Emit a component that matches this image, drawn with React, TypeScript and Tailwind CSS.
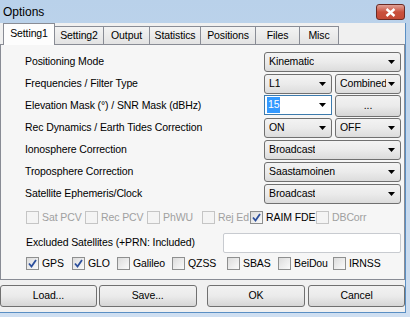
import React from "react";

const font = { fontFamily: '"Liberation Sans", Arial, sans-serif' };

function Arrow() {
  return (
    <svg width="7" height="4" viewBox="0 0 7 4" className="shrink-0">
      <path d="M0 0H7L3.5 4Z" fill="#000" />
    </svg>
  );
}

function Combo({ value, className = "" }: { value: string; className?: string }) {
  return (
    <div
      className={`flex h-[20px] items-center justify-between gap-[2px] rounded-[3px] border border-[#707070] bg-gradient-to-b from-[#f3f3f3] via-[#ebebeb] to-[#dcdcdc] pl-[4px] pr-[5px] ${className}`}
    >
      <span className="min-w-0 overflow-hidden whitespace-nowrap">{value}</span>
      <Arrow />
    </div>
  );
}

function Check({
  label,
  checked = false,
  disabled = false,
  width,
}: {
  label: string;
  checked?: boolean;
  disabled?: boolean;
  width: string;
}) {
  return (
    <div className={`flex shrink-0 items-center gap-[3px] whitespace-nowrap ${width}`}>
      <div
        className={`flex h-[13px] w-[13px] shrink-0 items-center justify-center border ${
          disabled
            ? "border-[#c5c5c5] bg-[#f4f4f4]"
            : "border-[#8e8f8f] bg-gradient-to-br from-[#dcdcdc] to-[#fbfbfb]"
        }`}
      >
        {checked && (
          <svg width="9" height="9" viewBox="0 0 9 9">
            <path d="M1 4.5L3.5 7.5L8 1" stroke="#2c4f9c" strokeWidth="1.8" fill="none" />
          </svg>
        )}
      </div>
      <span className={disabled ? "text-[#a0a0a0]" : "text-black"}>{label}</span>
    </div>
  );
}

function Button({ label, className = "" }: { label: string; className?: string }) {
  return (
    <div
      className={`flex h-[22px] items-center justify-center rounded-[3px] border border-[#707070] bg-gradient-to-b from-[#f2f2f2] via-[#ebebeb] to-[#d6d6d6] ${className}`}
    >
      {label}
    </div>
  );
}

const tabs = [
  { name: "Setting2", w: "w-[49px]" },
  { name: "Output", w: "w-[46px]" },
  { name: "Statistics", w: "w-[51px]" },
  { name: "Positions", w: "w-[55px]" },
  { name: "Files", w: "w-[44px]" },
  { name: "Misc", w: "w-[39px]" },
];

const rows: { label: string; right: React.ReactNode }[] = [
  { label: "Positioning Mode", right: <Combo value="Kinematic" className="w-[137px]" /> },
  {
    label: "Frequencies / Filter Type",
    right: (
      <div className="flex gap-[3px]">
        <Combo value="L1" className="w-[68px]" />
        <Combo value="Combined" className="w-[66px]" />
      </div>
    ),
  },
  {
    label: "Elevation Mask (°) / SNR Mask (dBHz)",
    right: (
      <div className="flex gap-[3px]">
        <div className="flex h-[20px] w-[68px] items-center justify-between border border-[#3d7bad] bg-white pl-[2px] pr-[5px]">
          <span className="bg-[#3399ff] px-[1px] text-white">15</span>
          <Arrow />
        </div>
        <Button label="..." className="h-[20px] w-[66px]" />
      </div>
    ),
  },
  {
    label: "Rec Dynamics / Earth Tides Correction",
    right: (
      <div className="flex gap-[3px]">
        <Combo value="ON" className="w-[68px]" />
        <Combo value="OFF" className="w-[66px]" />
      </div>
    ),
  },
  { label: "Ionosphere Correction", right: <Combo value="Broadcast" className="w-[137px]" /> },
  { label: "Troposphere Correction", right: <Combo value="Saastamoinen" className="w-[137px]" /> },
  { label: "Satellite Ephemeris/Clock", right: <Combo value="Broadcast" className="w-[137px]" /> },
];

export default function App() {
  return (
    <div
      className="relative h-[317px] w-[410px] overflow-hidden bg-gradient-to-b from-[#b9d1ea] to-[#cfdff1] text-[10.5px] tracking-[-0.1px] text-black"
      style={font}
    >
      {/* title bar */}
      <div className="flex h-[23px] items-start justify-between pl-[3px] pr-[5px]">
        <span className="pt-[3px] text-[12px] tracking-normal text-black">Options</span>
        <div className="mt-[4px] flex h-[16px] w-[29px] items-center justify-center rounded-[3px] border border-[#6b2a24] bg-gradient-to-b from-[#e0a197] via-[#c9503d] to-[#c44a36]">
          <svg width="11" height="9" viewBox="0 0 11 9">
            <path d="M1.5 1L9.5 8M9.5 1L1.5 8" stroke="#fff" strokeWidth="2.4" />
          </svg>
        </div>
      </div>

      {/* client area */}
      <div className="flex h-[290px] w-[406px] flex-col border-b border-r border-[#5a8fc4] bg-[#f0f0f0]">
        {/* tab strip */}
        <div className="relative z-10 flex h-[21px] items-end pl-[3px]">
          <div className="mb-[-1px] flex h-[22px] w-[52px] items-center justify-center border border-b-0 border-[#898c95] bg-[#fdfdfd] pb-[2px]">
            Setting1
          </div>
          {tabs.map((t) => (
            <div
              key={t.name}
              className={`flex h-[18px] ${t.w} items-center justify-center border border-b-0 border-l-0 border-[#898c95] bg-gradient-to-b from-[#f3f3f3] to-[#e3e3e3]`}
            >
              {t.name}
            </div>
          ))}
        </div>

        {/* page */}
        <div className="flex h-[236px] w-[405px] flex-col border border-[#898c95] bg-[#f6f6f6] pl-[24px] pr-[3px] pt-[7px]">
          <div className="flex flex-col gap-[2px]">
            {rows.map((r) => (
              <div key={r.label} className="flex h-[20px] items-center justify-between">
                <span className="whitespace-nowrap">{r.label}</span>
                {r.right}
              </div>
            ))}
          </div>

          <div className="mt-[6px] flex h-[15px] items-center pl-[1px]">
            <Check label="Sat PCV" disabled width="w-[59px]" />
            <Check label="Rec PCV" disabled width="w-[62px]" />
            <Check label="PhWU" disabled width="w-[55px]" />
            <Check label="Rej Ed" disabled width="w-[48px]" />
            <Check label="RAIM FDE" checked width="w-[66px]" />
            <Check label="DBCorr" disabled width="w-[60px]" />
          </div>

          <div className="mt-[8px] flex h-[20px] items-center justify-between">
            <span className="whitespace-nowrap pl-[1px]">Excluded Satellites (+PRN: Included)</span>
            <div className="h-[20px] w-[178px] rounded-[2px] border border-[#c8cbd0] bg-white" />
          </div>

          <div className="mt-[3px] flex h-[15px] items-center pl-[1px]">
            <Check label="GPS" checked width="w-[46px]" />
            <Check label="GLO" checked width="w-[45px]" />
            <Check label="Galileo" width="w-[55px]" />
            <Check label="QZSS" width="w-[55px]" />
            <Check label="SBAS" width="w-[51px]" />
            <Check label="BeiDou" width="w-[55px]" />
            <Check label="IRNSS" width="w-[60px]" />
          </div>
        </div>

        {/* buttons */}
        <div className="mt-[5px] flex items-center">
          <Button label="Load..." className="w-[97px]" />
          <Button label="Save..." className="ml-[2px] w-[98px]" />
          <Button label="OK" className="ml-[10px] w-[99px]" />
          <Button label="Cancel" className="ml-[3px] w-[97px]" />
        </div>
      </div>
    </div>
  );
}
